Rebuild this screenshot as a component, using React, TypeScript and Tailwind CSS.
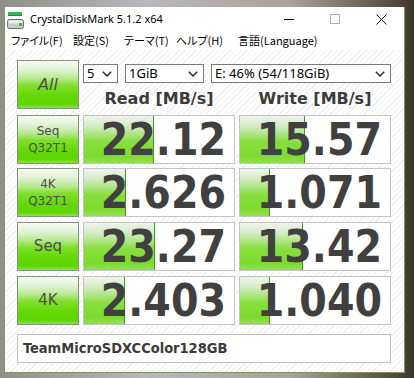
import React from "react";

const rows = [
  { label: ["Seq", "Q32T1"], read: "22.12", rw: 70, write: "15.57", ww: 65, mt: "mt-[6px]" },
  { label: ["4K", "Q32T1"], read: "2.626", rw: 42, write: "1.071", ww: 30, mt: "mt-[4px]" },
  { label: ["Seq"], read: "23.27", rw: 71, write: "13.42", ww: 63, mt: "mt-[5px]" },
  { label: ["4K"], read: "2.403", rw: 41, write: "1.040", ww: 30, mt: "mt-[5px]" },
];

const btnBg =
  "bg-[linear-gradient(to_bottom,#f7faf5_0%,#e2f2d6_18%,#b4e98a_38%,#7fdf2a_52%,#62d804_75%,#5fd600_92%,#8ee048_100%)]";

const barBg =
  "bg-[linear-gradient(to_bottom,#eff3ed_0%,#d6ecc8_20%,#aae47e_40%,#88df3e_54%,#7cda2e_86%,#92e150_100%)]";

function Chevron() {
  return (
    <svg width="10" height="6" viewBox="0 0 10 6" className="shrink-0">
      <polyline points="0.8,0.8 5,5 9.2,0.8" fill="none" stroke="#222" strokeWidth="1.4" />
    </svg>
  );
}

function Select({ w, text }: { w: string; text: string }) {
  return (
    <div
      className={`${w} h-[19px] border border-[#7a7a7a] bg-white flex items-center justify-between pl-[3px] pr-[5px] text-[13px] leading-none text-black`}
      style={{ fontFamily: '"Noto Sans", sans-serif' }}
    >
      <span className="-mt-[1px]">{text}</span>
      <Chevron />
    </div>
  );
}

function ValueCell({ value, bar }: { value: string; bar: number }) {
  return (
    <div className="relative w-[152px] h-[49px] border border-[#c4c4c4] bg-white overflow-hidden">
      <div
        className={`absolute left-0 top-0 bottom-0 ${barBg} border-r border-[#3f9a1c]`}
        style={{ width: bar }}
      />
      <div
        className="relative h-full flex items-center justify-end pr-[8px] text-[44px] font-bold leading-none text-[#404040] [font-stretch:condensed]"
        style={{ fontFamily: '"DejaVu Sans Condensed", "DejaVu Sans", sans-serif' }}
      >
        {value}
      </div>
    </div>
  );
}

function LabelButton({ lines }: { lines: string[] }) {
  const two = lines.length > 1;
  return (
    <div
      className={`w-[62px] h-[49px] border border-[#84927e] ${btnBg} flex flex-col items-center justify-center text-[#4e4e4e] ${
        two ? "text-[12px] leading-[17px]" : "text-[15px] leading-none"
      }`}
      style={{ fontFamily: '"DejaVu Sans", sans-serif' }}
    >
      {lines.map((l) => (
        <span key={l}>{l}</span>
      ))}
    </div>
  );
}

function AppIcon() {
  return (
    <svg width="18" height="18" viewBox="0 0 18 18" className="shrink-0">
      <rect x="1" y="0" width="14" height="4" fill="#34b34a" />
      <rect x="1" y="3" width="14" height="1" fill="#1e8a34" />
      <rect x="0.5" y="7.5" width="16" height="9" rx="2" fill="#c9cbcd" stroke="#6c7074" />
      <rect x="1.5" y="8.5" width="14" height="3" rx="1" fill="#eceeef" />
      <rect x="12" y="11" width="3" height="3" fill="#3dbd3d" />
    </svg>
  );
}

export default function App() {
  return (
    <div className="w-[414px] h-[378px] overflow-hidden bg-[linear-gradient(90deg,#8f9088_0%,#b9b6bc_35%,#a9a39a_70%,#4c4536_97%,#3b3528_100%)]">
      <div className="ml-[4px] mt-[7px] w-[401px] h-[366px] border border-[#7f9565] border-t-0 bg-white flex flex-col">
        {/* title bar */}
        <div
          className="h-[24px] flex items-center text-[11px] text-black relative"
          style={{ fontFamily: '"Noto Sans", sans-serif' }}
        >
          <div className="ml-[2px] mt-[3px]">
            <AppIcon />
          </div>
          <span className="ml-[5px] mt-[1px]">CrystalDiskMark 5.1.2 x64</span>
          <div className="ml-auto flex items-center h-full">
            <div className="w-[46px] h-full flex items-center justify-center">
              <div className="w-[10px] h-px bg-black" />
            </div>
            <div className="w-[46px] h-full flex items-center justify-center">
              <div className="w-[10px] h-[10px] border border-[#b0b0b0]" />
            </div>
            <div className="w-[46px] h-full flex items-center justify-center">
              <svg width="11" height="11" viewBox="0 0 11 11">
                <path d="M0.5 0.5 L10.5 10.5 M10.5 0.5 L0.5 10.5" stroke="#111" strokeWidth="1" />
              </svg>
            </div>
          </div>
        </div>
        {/* menu bar */}
        <div
          className="h-[19px] flex items-center text-[11px] text-black [font-feature-settings:'palt'] pl-[6px] whitespace-nowrap"
          style={{ fontFamily: '"Noto Sans CJK JP", "Noto Sans", sans-serif' }}
        >
          <span className="w-[62px] shrink-0">ファイル(F)</span>
          <span className="w-[51px] shrink-0">設定(S)</span>
          <span className="w-[52px] shrink-0">テーマ(T)</span>
          <span className="w-[62px] shrink-0">ヘルプ(H)</span>
          <span className="shrink-0">言語(Language)</span>
        </div>
        {/* content */}
        <div className="flex-1 bg-[repeating-linear-gradient(135deg,#ffffff_0px,#ffffff_3px,#f0f0f0_3px,#f0f0f0_4px)] pl-[12px] pt-[10px]">
          <div className="flex gap-[4px]">
            <div
              className={`w-[62px] h-[49px] border border-[#84927e] ${btnBg} flex items-center justify-center text-[16px] italic text-[#4e4e4e]`}
              style={{ fontFamily: '"DejaVu Sans", sans-serif' }}
            >
              All
            </div>
            <div className="flex flex-col">
              <div className="flex mt-[4px]">
                <Select w="w-[35px]" text="5" />
                <div className="ml-[7px]">
                  <Select w="w-[79px]" text="1GiB" />
                </div>
                <div className="ml-[7px]">
                  <Select w="w-[180px]" text="E: 46% (54/118GiB)" />
                </div>
              </div>
              <div
                className="flex gap-[4px] mt-[8px] text-[16px] font-bold text-[#3c3c3c] leading-none"
                style={{ fontFamily: '"DejaVu Sans", sans-serif' }}
              >
                <div className="w-[152px] text-center">Read [MB/s]</div>
                <div className="w-[152px] text-center">Write [MB/s]</div>
              </div>
            </div>
          </div>
          {rows.map((r) => (
            <div key={r.read} className={`flex gap-[4px] ${r.mt}`}>
              <LabelButton lines={r.label} />
              <ValueCell value={r.read} bar={r.rw} />
              <ValueCell value={r.write} bar={r.ww} />
            </div>
          ))}
          <div
            className="mt-[9px] w-[374px] h-[29px] border border-[#c4c4c4] bg-white flex items-center pl-[5px] text-[14.5px] font-bold text-[#3c3c3c] [font-stretch:condensed]"
            style={{ fontFamily: '"DejaVu Sans Condensed", "DejaVu Sans", sans-serif' }}
          >
            TeamMicroSDXCColor128GB
          </div>
        </div>
      </div>
    </div>
  );
}
